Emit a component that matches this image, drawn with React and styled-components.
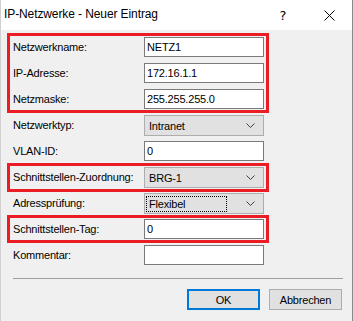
import React from "react";
import styled, { createGlobalStyle } from "styled-components";

const Global = createGlobalStyle`
  html, body { margin: 0; padding: 0; background: #f0f0f0; }
  body { font-family: "Liberation Sans", Arial, sans-serif; }
`;

const Window = styled.div`
  width: 353px;
  height: 321px;
  box-sizing: border-box;
  background: #f0f0f0;
  border-left: 1px solid #d0d0d0;
  border-right: 1px solid #8a8a8a;
  display: flex;
  flex-direction: column;
  overflow: hidden;
`;

const TitleBar = styled.div`
  height: 30px;
  flex: none;
  background: #ffffff;
  display: flex;
  align-items: center;
`;

const Title = styled.div`
  flex: 1;
  padding-left: 3px;
  font-family: "Liberation Sans", Arial, sans-serif;
  font-size: 12px;
  letter-spacing: -0.1px;
  color: #000;
  line-height: 30px;
  padding-bottom: 2px;
`;

const CaptionButton = styled.div`
  width: 46px;
  height: 30px;
  display: flex;
  align-items: center;
  justify-content: center;
  color: #000;
  font-family: "DejaVu Sans", sans-serif;
  font-size: 13px;
`;

const Content = styled.div`
  flex: 1;
  display: flex;
  flex-direction: column;
  padding: 7px 0 0 12px;
`;

const Highlight = styled.div`
  position: relative;
  display: flex;
  flex-direction: column;
  &::after {
    content: "";
    position: absolute;
    left: -6px;
    top: -4px;
    width: 262px;
    height: ${(p) => p.$h}px;
    box-sizing: border-box;
    border: 3px solid #ec1c24;
    pointer-events: none;
  }
`;

const Row = styled.div`
  height: 26px;
  display: grid;
  grid-template-columns: 131px 120px;
  align-items: start;
`;

const Label = styled.div`
  font-size: 11px;
  letter-spacing: -0.2px;
  line-height: ${(p) => (p.$combo ? 21 : 20)}px;
  color: #000;
  white-space: nowrap;
`;

const TextBox = styled.div`
  height: 20px;
  box-sizing: border-box;
  border: 1px solid #7a7a7a;
  background: #fff;
  font-size: 11px;
  letter-spacing: -0.2px;
  line-height: 18px;
  padding-left: 2px;
  color: #000;
`;

const Combo = styled.div`
  height: 21px;
  box-sizing: border-box;
  border: 1px solid #adadad;
  background: #e1e1e1;
  display: flex;
  align-items: center;
  padding: 0 8px 0 1px;
  font-size: 11px;
  letter-spacing: -0.2px;
  color: #000;
`;

const ComboText = styled.div`
  flex: 1;
  height: 16px;
  margin-right: 19px;
  padding-left: 2px;
  box-sizing: border-box;
  border: ${(p) => (p.$focus ? "1px dotted #000" : "1px solid transparent")};
  display: flex;
  align-items: center;
`;

const Chevron = () => (
  <svg width="9" height="5" viewBox="0 0 9 5">
    <polyline points="0.5,0.5 4.5,4.5 8.5,0.5" fill="none" stroke="#404040" strokeWidth="1" />
  </svg>
);

const Separator = styled.div`
  height: 1px;
  background: #a0a0a0;
  margin: 7px 9px 0 0;
`;

const Buttons = styled.div`
  display: flex;
  justify-content: flex-end;
  gap: 9px;
  margin: 10px 10px 0 0;
`;

const Button = styled.div`
  width: 73px;
  height: 21px;
  box-sizing: border-box;
  background: #e1e1e1;
  border: ${(p) => (p.$default ? "2px solid #0078d7" : "1px solid #adadad")};
  display: flex;
  align-items: center;
  justify-content: center;
  font-size: 11px;
  letter-spacing: -0.2px;
  color: #000;
`;

const Field = ({ label, value }) => (
  <Row>
    <Label>{label}</Label>
    <TextBox>{value}</TextBox>
  </Row>
);

const Select = ({ label, value, focus }) => (
  <Row>
    <Label $combo>{label}</Label>
    <Combo>
      <ComboText $focus={focus}>{value}</ComboText>
      <Chevron />
    </Combo>
  </Row>
);

export default function App() {
  return (
    <>
      <Global />
      <Window>
        <TitleBar>
          <Title>IP-Netzwerke - Neuer Eintrag</Title>
          <CaptionButton>?</CaptionButton>
          <CaptionButton>
            <svg width="11" height="11" viewBox="0 0 11 11">
              <path d="M0.5 0.5 L10.5 10.5 M10.5 0.5 L0.5 10.5" stroke="#000" strokeWidth="1" />
            </svg>
          </CaptionButton>
        </TitleBar>
        <Content>
          <Highlight $h={80}>
            <Field label="Netzwerkname:" value="NETZ1" />
            <Field label="IP-Adresse:" value="172.16.1.1" />
            <Field label="Netzmaske:" value="255.255.255.0" />
          </Highlight>
          <Select label="Netzwerktyp:" value="Intranet" />
          <Field label="VLAN-ID:" value="0" />
          <Highlight $h={29}>
            <Select label="Schnittstellen-Zuordnung:" value="BRG-1" />
          </Highlight>
          <Select label="Adressprüfung:" value="Flexibel" focus />
          <Highlight $h={28}>
            <Field label="Schnittstellen-Tag:" value="0" />
          </Highlight>
          <Field label="Kommentar:" value="" />
          <Separator />
          <Buttons>
            <Button $default>OK</Button>
            <Button>Abbrechen</Button>
          </Buttons>
        </Content>
      </Window>
    </>
  );
}
